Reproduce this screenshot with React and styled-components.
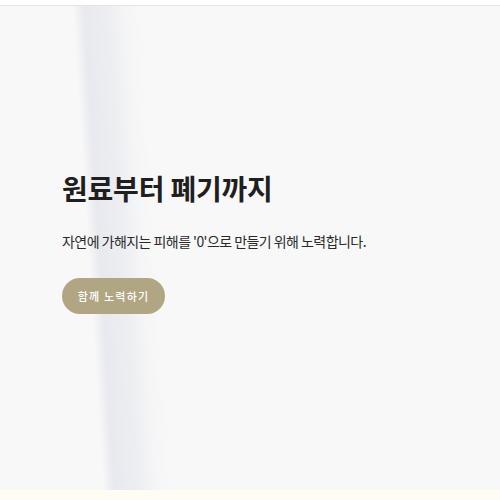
import React from "react";
import styled, { createGlobalStyle } from "styled-components";

const Global = createGlobalStyle`
  html, body { margin: 0; padding: 0; background: #fffcf4; }
  body { font-family: "Noto Sans CJK KR", "Noto Sans", sans-serif; }
  * { box-sizing: border-box; }
`;

const Page = styled.div`
  width: 500px;
  display: flex;
  flex-direction: column;
`;

const Header = styled.header`
  height: 6px;
  background: #ffffff;
  border-bottom: 1px solid #e6e6e8;
`;

const Hero = styled.section`
  height: 484px;
  background-color: #f8f8f8;
  background-image: linear-gradient(
    86.4deg,
    rgba(230, 231, 237, 0) 0,
    rgba(230, 231, 237, 0) 103px,
    rgba(231, 232, 238, 0.9) 114px,
    rgba(234, 235, 240, 0.8) 138px,
    rgba(240, 241, 244, 0.4) 155px,
    rgba(248, 248, 248, 0) 172px
  );
  display: flex;
  flex-direction: column;
  justify-content: center;
  padding: 0 0 12px 62px;
`;

const Title = styled.h1`
  margin: 0;
  font-size: 28px;
  font-weight: 700;
  color: #1f1f1f;
  line-height: 1.3;
  letter-spacing: -0.2px;
`;

const Sub = styled.p`
  margin: 26px 0 0;
  font-size: 14px;
  color: #2a2a2a;
  line-height: 1.4;
  letter-spacing: -0.55px;
`;

const Button = styled.button`
  margin-top: 27px;
  width: 103px;
  height: 36px;
  border: none;
  border-radius: 18px;
  background: #b0a684;
  color: #ffffff;
  font-family: inherit;
  font-size: 11px;
  letter-spacing: 1.2px;
  font-weight: 500;
  cursor: pointer;
`;

export default function App() {
  return (
    <Page>
      <Global />
      <Header />
      <Hero>
        <Title>원료부터 폐기까지</Title>
        <Sub>자연에 가해지는 피해를 '0'으로 만들기 위해 노력합니다.</Sub>
        <div>
          <Button>함께 노력하기</Button>
        </div>
      </Hero>
    </Page>
  );
}
